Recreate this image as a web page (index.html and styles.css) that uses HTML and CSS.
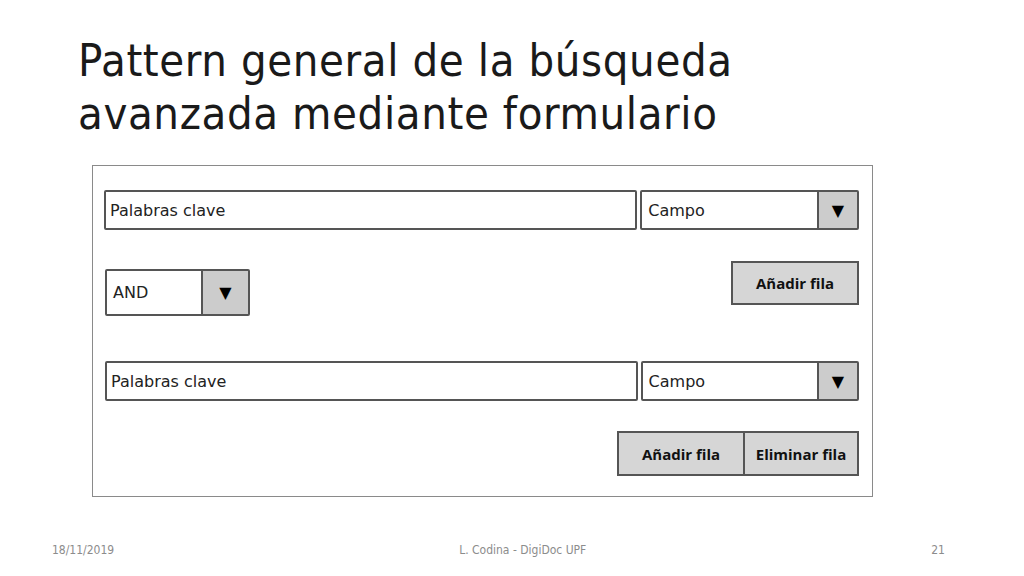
FILE: index.html
```html
<!DOCTYPE html>
<html lang="es">
<head>
    <meta charset="UTF-8">
    <title>Pattern general de la búsqueda avanzada</title>
    <link rel="stylesheet" href="styles.css">
</head>
<body>
    <div class="slide">
        <h1 class="title">Pattern general de la búsqueda<br>avanzada mediante formulario</h1>

        <div class="mockup">
            <div class="row row-first">
                <div class="field field-wide">Palabras clave</div>
                <div class="select select-campo">
                    <span class="select-text">Campo</span>
                    <span class="select-arrow">&#9660;</span>
                </div>
            </div>

            <div class="row row-operator">
                <div class="select select-and">
                    <span class="select-text">AND</span>
                    <span class="select-arrow">&#9660;</span>
                </div>
                <div class="btn btn-add">Añadir fila</div>
            </div>

            <div class="row row-second">
                <div class="field field-wide">Palabras clave</div>
                <div class="select select-campo">
                    <span class="select-text">Campo</span>
                    <span class="select-arrow">&#9660;</span>
                </div>
            </div>

            <div class="row row-actions">
                <div class="btn-group">
                    <div class="btn btn-add-2">Añadir fila</div>
                    <div class="btn btn-remove">Eliminar fila</div>
                </div>
            </div>
        </div>

        <div class="footer">
            <span class="footer-date">18/11/2019</span>
            <span class="footer-author">L. Codina - DigiDoc UPF</span>
            <span class="footer-page">21</span>
        </div>
    </div>
</body>
</html>
```

FILE: styles.css
```css
body {
    margin: 0;
    background: white;
    font-family: "DejaVu Sans Condensed", "DejaVu Sans", sans-serif;
}
.slide {
    width: 1024px;
    height: 576px;
    position: relative;
    overflow: hidden;
}
.title {
    margin: 0;
    padding: 34px 0 0 78px;
    font-weight: normal;
    font-size: 45px;
    line-height: 53px;
    letter-spacing: 0.6px;
    color: #1a1a1a;
}
.mockup {
    margin: 25px 0 0 92px;
    width: 781px;
    height: 332px;
    box-sizing: border-box;
    border: 1px solid #8a8a8a;
    padding: 24px 13px 0 11px;
    font-family: "DejaVu Sans", sans-serif;
}
.row {
    display: flex;
    align-items: flex-start;
}
.row-operator {
    justify-content: space-between;
    margin-top: 31px;
    padding-left: 1px;
}
.row-second {
    margin-top: 45px;
    padding-left: 1px;
}
.row-actions {
    justify-content: flex-end;
    margin-top: 30px;
}
.field {
    height: 40px;
    box-sizing: border-box;
    border: 2px solid #555;
    border-radius: 2px;
    padding-left: 4px;
    display: flex;
    align-items: center;
    font-size: 16px;
    color: #222;
}
.field-wide {
    width: 534px;
    margin-right: 3px;
}
.select {
    display: flex;
    box-sizing: border-box;
    border: 2px solid #555;
    border-radius: 2px;
    font-size: 16px;
    color: #222;
}
.select-campo {
    width: 219px;
    height: 40px;
}
.select-and {
    width: 145px;
    height: 47px;
    margin-top: 8px;
}
.select-text {
    flex: 1;
    display: flex;
    align-items: center;
    padding-left: 6px;
}
.select-arrow {
    width: 38px;
    background: #cccccc;
    border-left: 2px solid #555;
    display: flex;
    align-items: center;
    justify-content: center;
    font-size: 16px;
    color: #000;
}
.select-and .select-arrow {
    width: 45px;
}
.btn {
    box-sizing: border-box;
    background: #d6d6d6;
    border: 2px solid #555;
    display: flex;
    align-items: center;
    justify-content: center;
    font-family: "Open Sans", sans-serif;
    font-weight: bold;
    font-size: 15px;
    color: #111;
}
.btn-add {
    width: 128px;
    height: 44px;
}
.btn-group {
    display: flex;
}
.btn-add-2 {
    width: 128px;
    height: 45px;
}
.btn-remove {
    width: 114px;
    height: 45px;
    border-left: none;
}
.footer {
    position: absolute;
    left: 52px;
    right: 79px;
    top: 543px;
    display: flex;
    justify-content: space-between;
    font-size: 12px;
    color: #8c8c8c;
}
```
